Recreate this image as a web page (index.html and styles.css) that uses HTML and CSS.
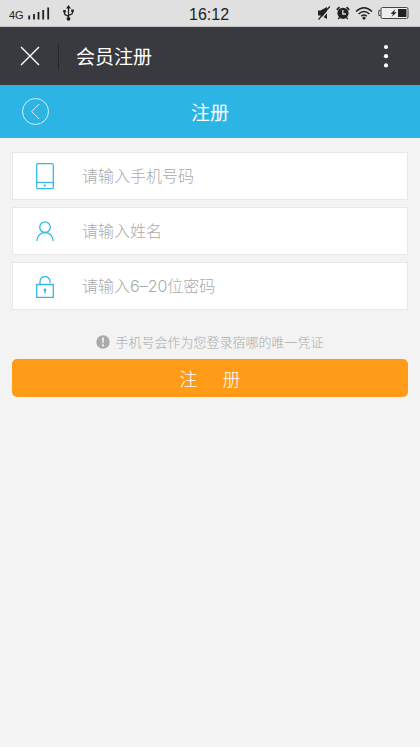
FILE: index.html
```html
<!DOCTYPE html>
<html lang="zh-CN">
<head>
<meta charset="utf-8">
<meta name="viewport" content="width=device-width, initial-scale=1">
<title>会员注册</title>
<link rel="stylesheet" href="styles.css">
</head>
<body>
<div class="status">
  <div class="status-side">
    <span class="network">4G</span>
    <svg class="signal" width="22" height="14" viewBox="0 0 22 14" aria-hidden="true"><path d="M1.200 9.500v4M6 8V13.500M10.500 6V13.500M15.200 4V13.500M20.200 1.500v12" fill="none" stroke="#222" stroke-width="1.800"/></svg>
    <svg width="11" height="16" viewBox="0 0 11 16" aria-hidden="true"><path d="M5.500 2v12M1.500 5.500v3q0 1 1 1.300L5.500 11.300M9.500 5v2.800q0 1-1 1.300L5.500 10.500" fill="none" stroke="#222" stroke-width="1.300"/><path d="M5.500 0 8 3.500H3zM.2 5h2.600v2.500H.2zM8.200 4.500h2.600V7H8.200z" fill="#222"/><circle cx="5.500" cy="13.800" r="1.900" fill="#222"/></svg>
  </div>
  <time class="clock">16:12</time>
  <div class="status-side status-end">
    <svg width="14" height="14" viewBox="0 0 14 14" aria-hidden="true"><path d="M1 4.500h2.500L10 1v12L3.500 9.500H1z" fill="#222"/><path d="M3.500 14 14.500.5" stroke="#e0e0e0" stroke-width="1.300"/><path d="M1.500 13.500 12.800.5" stroke="#222" stroke-width="1.200"/></svg>
    <svg width="14" height="14" viewBox="0 0 14 14" aria-hidden="true"><circle cx="7" cy="7.300" r="5.600" fill="#222"/><path d="M.8 3.800 3.500 1.200M13.200 3.800l-2.700-2.600" stroke="#222" stroke-width="1.800"/><path d="m3.500 11.500-1.300 1.500M10.500 11.500l1.300 1.500" stroke="#222" stroke-width="1.300"/><path d="M6.800 4v4H10" fill="none" stroke="#e0e0e0" stroke-width="1.300"/></svg>
    <svg width="18" height="14" viewBox="0 0 18 14" aria-hidden="true"><path d="M1 5.500q8-7.500 16 0M3.600 8q5.400-5 10.800 0M6.200 10.300q2.800-2.500 5.600 0" fill="none" stroke="#222" stroke-width="1.500"/><path d="m9 10.500 2 1.500-2 2-2-2z" fill="#222"/></svg>
    <svg width="31" height="14" viewBox="0 0 31 14" aria-hidden="true"><rect x="3" y="1.500" width="27" height="11" rx="1.500" fill="#eee" stroke="#444"/><path d="M2.500 4.500H.8v5h1.700" fill="none" stroke="#444"/><path d="M20 3h8.500v8H20z" fill="#222"/><path d="m17.500 3-5 4.700h2.700L13.500 11l5.300-4.700H16z" fill="#222"/></svg>
  </div>
</div>
<header class="appbar">
  <button class="icon-button close" type="button" aria-label="关闭"><svg width="20" height="20" viewBox="0 0 20 20"><path d="m1 1 18 18M19 1 1 19" stroke="#fff" stroke-width="1.400"/></svg></button>
  <h1 class="app-title">会员注册</h1>
  <button class="icon-button more" type="button" aria-label="更多"><svg width="6" height="24" viewBox="0 0 6 24"><g fill="#fff"><circle cx="3" cy="3" r="2.100"/><circle cx="3" cy="12.200" r="2.100"/><circle cx="3" cy="21.400" r="2.100"/></g></svg></button>
</header>
<nav class="pagebar">
  <button class="icon-button" type="button" aria-label="返回"><svg width="28" height="28" viewBox="0 0 28 28"><g fill="none" stroke="#d8f1fa"><circle cx="13.500" cy="13.500" r="13"/><path d="m17.200 6-7.500 7.500 7.500 7.500"/></g></svg></button>
  <h2 class="page-title">注册</h2>
</nav>
<main>
  <form class="form">
    <label class="field">
      <svg class="field-icon" width="18" height="28" viewBox="0 0 18 28" aria-hidden="true"><rect x=".7" y="1.700" width="16.600" height="25" rx="1.300"/><path d="M1 20.500h16"/><path class="solid" d="M7.800 22.500h2v2h-2z"/></svg>
      <input type="tel" placeholder="请输入手机号码" aria-label="手机号码">
    </label>
    <label class="field">
      <svg class="field-icon" width="18" height="28" viewBox="0 0 18 28" aria-hidden="true"><circle cx="9" cy="10.200" r="5.300"/><path d="M.8 24c0-4.800 3.600-8.500 8.200-8.500s8.200 3.700 8.200 8.500"/></svg>
      <input type="text" placeholder="请输入姓名" aria-label="姓名">
    </label>
    <label class="field">
      <svg class="field-icon" width="18" height="28" viewBox="0 0 18 28" aria-hidden="true"><path d="M.7 12.500h16.600v12.800H.7zM4 12.300V9.500a5 5 0 0 1 10 0v1.300"/><circle class="solid" cx="9" cy="18" r="1.400"/><path d="M9 18v3.500"/></svg>
      <input type="password" placeholder="请输入6–20位密码" aria-label="密码">
    </label>
    <p class="hint"><svg width="14" height="14" viewBox="0 0 14 14" aria-hidden="true"><circle cx="7" cy="7" r="6.700" fill="#aaa"/><path d="M6 2.500h2l-.4 5.700H6.400z" fill="#f3f3f3"/><circle cx="7" cy="10.400" r="1.100" fill="#f3f3f3"/></svg>手机号会作为您登录宿哪的唯一凭证</p>
    <button class="submit" type="submit"><span>注</span><span>册</span></button>
  </form>
</main>
</body>
</html>
```
FILE: styles.css
```css
* {
  box-sizing: border-box;
}

body {
  margin: 0;
  background: #f3f3f3;
  font-family: "Noto Sans CJK SC", sans-serif;
}

h1,
h2,
p {
  margin: 0;
  font-weight: 400;
}

svg {
  display: block;
  flex: none;
}

button {
  border: 0;
  font: inherit;
  cursor: pointer;
}

.status {
  display: flex;
  align-items: center;
  height: 27px;
  padding: 0 11px 0 9px;
  border-bottom: 1px solid #c4c4c4;
  background: #e0e0e0;
  color: #222;
  font-family: "Liberation Sans", sans-serif;
}

.status-side {
  display: flex;
  flex: 1;
  align-items: center;
}

.status-end {
  justify-content: flex-end;
  gap: 5px;
}

.network {
  padding-top: 3px;
  font-size: 11px;
}

.signal {
  margin: 0 13px 0 4px;
}

.clock {
  padding-top: 3px;
  font-size: 16px;
}

.icon-button {
  display: flex;
  align-items: center;
  justify-content: center;
  padding: 0;
  background: none;
}

.appbar {
  display: flex;
  align-items: center;
  height: 58px;
  background: #393a3f;
  color: #fff;
}

.close {
  width: 59px;
  height: 27px;
  padding-left: 2px;
  border-right: 1px solid #27282b;
}

.app-title {
  flex: 1;
  padding-left: 17px;
  font-size: 19px;
  line-height: 28px;
}

.more {
  width: 68px;
  height: 40px;
}

.pagebar {
  display: grid;
  grid-template-columns: 28px 1fr 28px;
  align-items: center;
  height: 53px;
  padding: 0 22px;
  background: #2cb4e4;
  color: #fff;
}

.page-title {
  font-size: 19px;
  line-height: 28px;
  text-align: center;
}

.form {
  display: flex;
  flex-direction: column;
  gap: 7px;
  padding: 14px 12px;
}

.field {
  display: flex;
  align-items: center;
  gap: 28px;
  height: 48px;
  padding: 0 23px;
  border: 1px solid #e8e8e8;
  background: #fff;
}

.field-icon {
  fill: none;
  stroke: #36b8e5;
  stroke-width: 1.3;
}

.solid {
  fill: #36b8e5;
  stroke: none;
}

.field input {
  flex: 1;
  min-width: 0;
  padding: 0;
  border: 0;
  outline: 0;
  background: none;
  color: #333;
  font: 300 16px/24px Inter, "Noto Sans CJK SC", sans-serif;
}

.field input::placeholder {
  color: #aaa;
}

.hint {
  display: flex;
  align-items: center;
  justify-content: center;
  gap: 5px;
  padding-top: 15px;
  color: #aaa;
  font-size: 13px;
  font-weight: 300;
  line-height: 20px;
}

.submit {
  display: flex;
  align-items: center;
  justify-content: center;
  gap: 25px;
  height: 38px;
  border-radius: 5px;
  background: #ff9b17;
  color: #fff;
  font-size: 18px;
  font-weight: 300;
}
```
